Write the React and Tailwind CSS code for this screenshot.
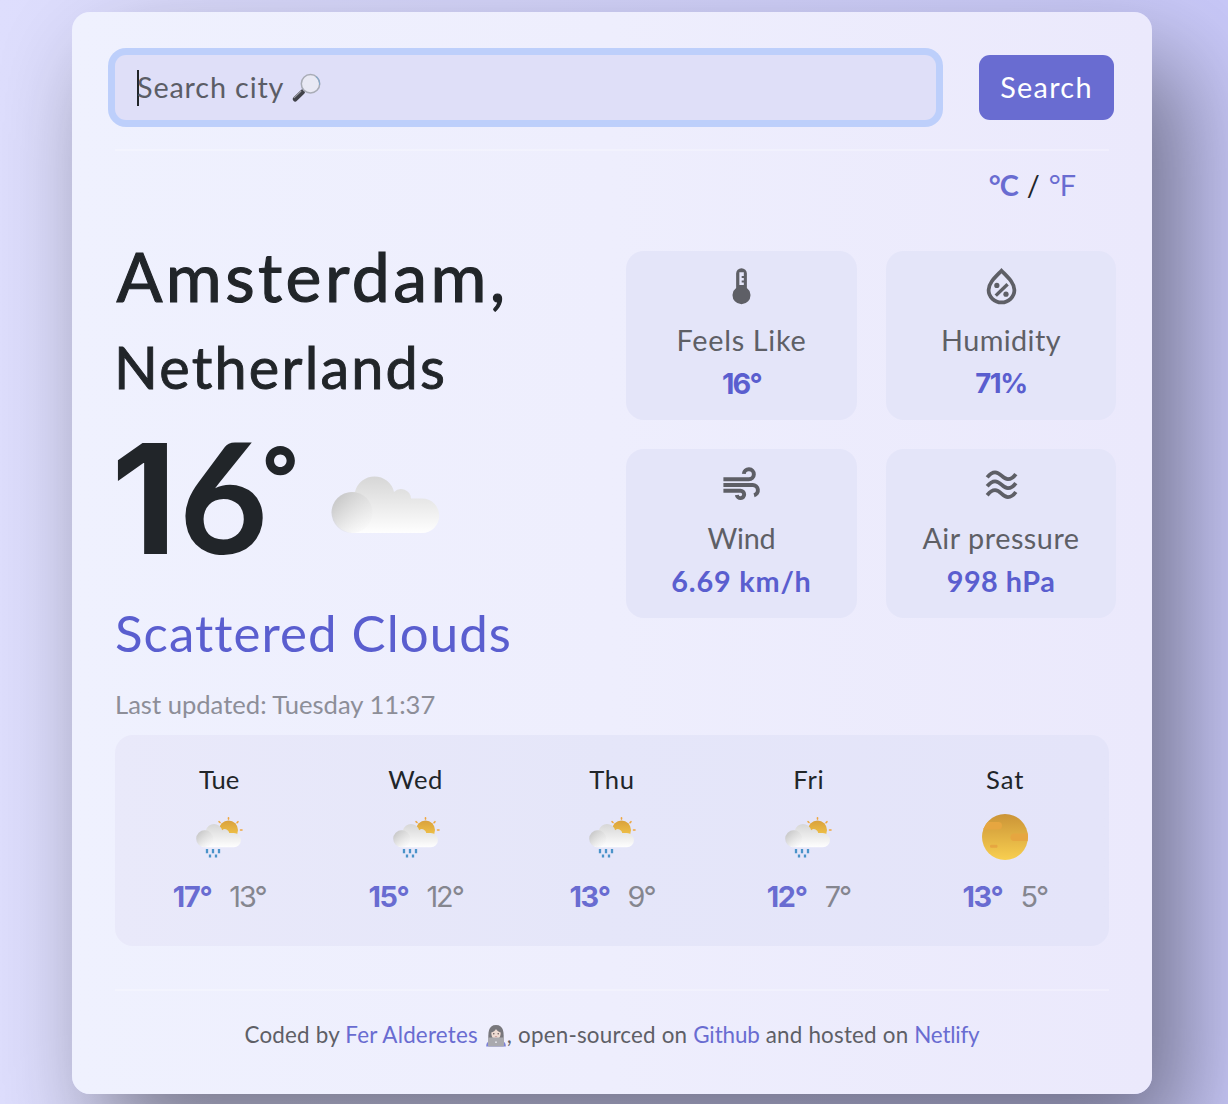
import React from "react";

function ThermometerIcon() {
  return (
    <svg viewBox="0 0 24 24" className="size-[43px]" fill="currentColor">
      <path
        fillRule="evenodd"
        d="M12 1.8a3 3 0 0 0-3 3v8.1a5 5 0 1 0 6 0V4.8a3 3 0 0 0-3-3ZM10.8 4h2.5v2.1h-1.2v1.1h1.2v1.5h-1.2v1h1.2v1.4h-2.5V4Z"
      />
    </svg>
  );
}

function HumidityIcon() {
  return (
    <svg viewBox="0 0 24 24" className="size-[43px]" fill="none" stroke="currentColor" strokeWidth="2.1">
      <path d="M12 3.2C8.6 6.7 4.8 9.9 4.8 14a7.2 6.9 0 0 0 14.4 0C19.2 9.9 15.4 6.7 12 3.2Z" />
      <path d="M8.8 17.1 15.4 10.7" strokeWidth="1.9" />
      <circle cx="9.4" cy="11.4" r="1.45" fill="currentColor" stroke="none" />
      <circle cx="14.5" cy="16.3" r="1.45" fill="currentColor" stroke="none" />
    </svg>
  );
}

function WindIcon() {
  return (
    <svg viewBox="0 0 24 24" className="size-[43px]" fill="none" stroke="currentColor" strokeWidth="2.2">
      <path d="M1.9 9.1h14.2a2.8 2.8 0 1 0-2.8-3" />
      <path d="M1.9 12.3h16.3a2.9 2.9 0 0 1 .8 5.7" />
      <path d="M1.9 15.5h9.5a2.05 2.05 0 1 1-2 2.3" />
    </svg>
  );
}

function WavesIcon() {
  return (
    <svg viewBox="0 0 24 24" className="size-[43px]" fill="none" stroke="currentColor" strokeWidth="2.1">
      <path d="M4 8C5.6 6 6.8 5.2 8.4 5.2 11.6 5.2 12.4 9 15.6 9 17.2 9 18.6 8.2 20 6.2" />
      <path d="M4 13C5.6 11 6.8 10.2 8.4 10.2 11.6 10.2 12.4 14 15.6 14 17.2 14 18.6 13.2 20 11.2" />
      <path d="M4 18C5.6 16 6.8 15.2 8.4 15.2 11.6 15.2 12.4 19 15.6 19 17.2 19 18.6 18.2 20 16.2" />
    </svg>
  );
}

function CloudShape({ id }) {
  return (
    <>
      <defs>
        <linearGradient id={id + "-body"} x1="0" y1="0" x2="0" y2="58" gradientUnits="userSpaceOnUse">
          <stop offset="0" stopColor="#d6d6d6" />
          <stop offset="1" stopColor="#ffffff" />
        </linearGradient>
        <linearGradient id={id + "-puff"} x1="5" y1="20" x2="38" y2="48" gradientUnits="userSpaceOnUse">
          <stop offset="0" stopColor="#c6c6c6" />
          <stop offset="1" stopColor="#e6e6e6" stopOpacity="0.1" />
        </linearGradient>
      </defs>
      <path
        d="M21 57A20.5 20.5 0 0 1 24 16A20 20 0 0 1 63 16A10 10 0 0 1 80 22.5H91A17.25 17.25 0 0 1 91 57Z"
        fill={`url(#${id}-body)`}
      />
      <circle cx="21" cy="36.5" r="20.5" fill={`url(#${id}-puff)`} />
    </>
  );
}

function CloudIcon() {
  return (
    <svg viewBox="0 0 109 58" className="h-[58px] w-[109px]">
      <CloudShape id="now" />
    </svg>
  );
}

function ShowerIcon({ id }) {
  return (
    <svg viewBox="0 0 58 58" className="size-[58px]">
      <defs>
        <linearGradient id={id + "-sun"} x1="0" y1="0" x2="0" y2="1">
          <stop offset="0" stopColor="#d9a13c" />
          <stop offset="1" stopColor="#f6cb4b" />
        </linearGradient>
      </defs>
      <circle cx="38.5" cy="22" r="9.5" fill={`url(#${id}-sun)`} />
      <g stroke="#eea63f" strokeWidth="1.6" strokeLinecap="round">
        <path d="M38.5 9.8v1.3M29 13.7l1 .8M48 13.7l-.9.9M50.5 22h1.5" />
      </g>
      <g transform="translate(6 15.7) scale(0.415)">
        <CloudShape id={id} />
      </g>
      <g stroke="#4a93c9" strokeWidth="2.3">
        <path d="M17 41v4.3M23 41v4.3M29 41v4.3M20 46.5v3M26 46.5v3" />
      </g>
    </svg>
  );
}

function SunIcon() {
  return (
    <svg viewBox="0 0 58 58" className="size-[58px]">
      <defs>
        <linearGradient id="sat-sun" x1="0" y1="0" x2="0" y2="1">
          <stop offset="0" stopColor="#cb9437" />
          <stop offset="1" stopColor="#f8cf50" />
        </linearGradient>
        <clipPath id="sat-clip">
          <circle cx="29" cy="29" r="23" />
        </clipPath>
      </defs>
      <circle cx="29" cy="29" r="23" fill="url(#sat-sun)" />
      <g fill="#e6a640" clipPath="url(#sat-clip)">
        <rect x="-2" y="14" width="28" height="7.5" rx="3.7" />
        <rect x="34.5" y="25.5" width="30" height="7.5" rx="3.7" />
        <rect x="14" y="36.8" width="7.5" height="3" rx="1.2" />
      </g>
    </svg>
  );
}

function MagnifierIcon() {
  return (
    <svg viewBox="0 0 30 30" className="size-[30px]">
      <path d="M11.5 19 4.2 26" stroke="#404148" strokeWidth="5" strokeLinecap="round" />
      <path d="M9.8 18.3 3.2 24.6" stroke="#9a9ba3" strokeWidth="1.3" strokeLinecap="round" />
      <path d="m14.5 16-2 2" stroke="#8d8f98" strokeWidth="2.5" />
      <circle cx="19.5" cy="10.8" r="9.2" fill="#e9e9f4" stroke="#a9acb6" strokeWidth="1.5" />
      <path d="M25 3.7A9.2 9.2 0 0 1 28.6 12" fill="none" stroke="#86a9cb" strokeWidth="1.1" />
    </svg>
  );
}

function TechnologistIcon() {
  return (
    <svg viewBox="0 0 22 23" className="h-[23px] w-[22px]">
      <path d="M3.5 17C3 9 3 1 11 1s8 8 7.5 16Z" fill="#78777c" />
      <path d="M6.3 8.5C8.5 8 10 7 11 5c1 2 3 3 4.7 3.500 0 4.500-2 7-4.700 7s-4.700-2.500-4.700-7Z" fill="#efdcd3" />
      <circle cx="8.8" cy="9.7" r=".7" fill="#55484a" />
      <circle cx="13.2" cy="9.7" r=".7" fill="#55484a" />
      <path d="M9.9 12.6h2.2" stroke="#c58f8f" strokeWidth=".8" />
      <path d="M1.2 22.5c0-3 1-4.500 3-5h13.600c2 .5 3 2 3 5Z" fill="#7b80d8" />
      <rect x="3" y="13.6" width="16" height="9" rx="1" fill="#a9a9ae" />
      <circle cx="11" cy="18.2" r=".9" fill="#e8e8ee" />
    </svg>
  );
}

const stats = [
  { label: "Feels Like", value: "16°", icon: ThermometerIcon, labelClass: "tracking-[0.7px]", valueClass: "font-[Inter,sans-serif] tracking-[-1.7px]" },
  { label: "Humidity", value: "71%", icon: HumidityIcon, labelClass: "tracking-[0.4px]", valueClass: "font-[Inter,sans-serif] text-[27.5px] tracking-[-1.4px]" },
  { label: "Wind", value: "6.69 km/h", icon: WindIcon, labelClass: "tracking-[-0.2px]", valueClass: "tracking-[0.8px]" },
  { label: "Air pressure", value: "998 hPa", icon: WavesIcon, labelClass: "tracking-[0.52px]", valueClass: "tracking-[0.5px]" },
];

const days = [
  { day: "Tue", max: "17°", min: "13°", dayClass: "tracking-[0.1px]" },
  { day: "Wed", max: "15°", min: "12°", dayClass: "tracking-[0.6px]" },
  { day: "Thu", max: "13°", min: "9°", dayClass: "tracking-[0.6px]" },
  { day: "Fri", max: "12°", min: "7°", dayClass: "pl-px tracking-[0.8px]" },
  { day: "Sat", max: "13°", min: "5°", dayClass: "pl-px tracking-[1px]" },
];

export default function App() {
  return (
    <div className="h-[1104px] w-[1228px] overflow-hidden bg-linear-to-r from-[#dedefd] to-[#c8c8f8] pt-3 font-[Lato,sans-serif] text-[#212529]">
      <main className="mx-auto h-[1082px] w-[1080px] -translate-x-[2px] rounded-[18px] bg-linear-to-r from-[#eff1fe] via-[#eeeefd] to-[#ebe9fc] px-[43px] pt-[43px] shadow-[30px_50px_100px_rgba(0,0,0,0.45)]">
        <form className="flex w-[999px] justify-between">
          <div className="flex h-[65px] w-[821px] items-center rounded-[11px] bg-[#dfdff8] pl-[22px] text-[28.8px] leading-none tracking-[0.85px] text-[#5b5d66] ring-7 ring-[#bdcffb]">
            <span className="-mr-0.5 h-9 w-0.5 bg-[#212529]" />
            <span>Search city</span>
            <span className="ml-[7px]">
              <MagnifierIcon />
            </span>
          </div>
          <button type="button" className="h-[65px] w-[135px] rounded-[11px] bg-[#696cd1] text-[28.8px] tracking-[1.3px] text-white">
            Search
          </button>
        </form>
        <div className="mt-[29px] h-0.5 bg-white/25" />
        <div className="mt-[13px] flex h-[43px] items-center justify-end gap-[9px] pr-[34px] text-[28.8px] text-[#696cd1]">
          <b className="tracking-[-1px]">°C</b>
          <span className="text-[#212529]">/</span>
          <span className="tracking-[-1px]">°F</span>
        </div>

        <section className="mt-[28px] flex justify-between">
          <div className="w-[500px] whitespace-nowrap">
            <h1 className="-mt-px ml-[1.5px] flex h-[83px] items-center text-[68px] tracking-[3.4px] [-webkit-text-stroke:1.1px_#212529]">Amsterdam,</h1>
            <h2 className="-ml-px flex h-[100px] items-center text-[57.6px] tracking-[2.2px] [-webkit-text-stroke:0.9px_#212529]">Netherlands</h2>
            <div className="flex h-[150px] items-center font-[Inter,sans-serif] font-bold">
              <span className="mt-[9px] -ml-[4px] flex items-baseline text-[153px] leading-none">
                <span className="w-[54px] tracking-[-12px]">1</span>
                <span className="ml-[14px] w-[78px] font-[Lato,sans-serif] tracking-[-12px]">6</span>
              </span>
              <span className="-mt-[28px] ml-[4px] w-[70px] text-[84px] leading-none">°</span>
              <span className="mt-[26px]">
                <CloudIcon />
              </span>
            </div>
            <p className="mt-[11px] flex h-[111px] items-center text-[51px] tracking-[1.03px] text-[#5a5ecf]">Scattered Clouds</p>
            <p className="flex h-[30px] items-center text-[25.6px] text-[#8d8e98]">Last updated: Tuesday 11:37</p>
          </div>
          <div className="mt-4 -mr-[7px] grid grid-cols-[231px_230px] content-start gap-[29px]">
            {stats.map((s) => (
              <div key={s.label} className="flex h-[169px] flex-col items-center rounded-[18px] bg-[#e4e5f9] pt-[14px] text-[28.8px] text-[#5e5f66]">
                <s.icon />
                <span className={"mt-[11px] h-[43px] leading-[43px] " + s.labelClass}>{s.label}</span>
                <span className={"h-[43px] leading-[43px] font-bold text-[#5a5ecf] " + s.valueClass}>{s.value}</span>
              </div>
            ))}
          </div>
        </section>

        <section className="mt-4 grid h-[211px] grid-cols-5 rounded-[18px] bg-linear-to-r from-[#e9e9fa] via-[#e5e6f9] to-[#e4e4f9] px-[6px] pt-[25px]">
          {days.map((d) => (
            <div key={d.day} className="flex flex-col items-center">
              <span className={"h-[38px] text-[25.6px] leading-[38px] " + d.dayClass}>{d.day}</span>
              <span className="mt-[10px]">{d.day === "Sat" ? <SunIcon /> : <ShowerIcon id={d.day} />}</span>
              <span className="mt-[9px] flex h-[43px] items-center gap-[18px] font-[Inter,sans-serif] text-[28.8px] tracking-[-1.3px]">
                <b className="text-[#696cd1]">{d.max}</b>
                <span className="tracking-[-2px] text-[#85868f]">{d.min}</span>
              </span>
            </div>
          ))}
        </section>

        <div className="mt-[43px] h-0.5 bg-white/25" />
        <footer className="mt-[27px] flex h-[34px] items-center justify-center text-[22.4px] tracking-[0.2px] whitespace-pre text-[#5e5f66]">
          <span>Coded by </span>
          <a className="text-[#696cd1]">Fer Alderetes</a>
          <span className="ml-[7px]">
            <TechnologistIcon />
          </span>
          <span>, open-sourced on </span>
          <a className="tracking-[-0.1px] text-[#696cd1]">Github</a>
          <span> and hosted on </span>
          <a className="tracking-[-0.2px] text-[#696cd1]">Netlify</a>
        </footer>
      </main>
    </div>
  );
}
